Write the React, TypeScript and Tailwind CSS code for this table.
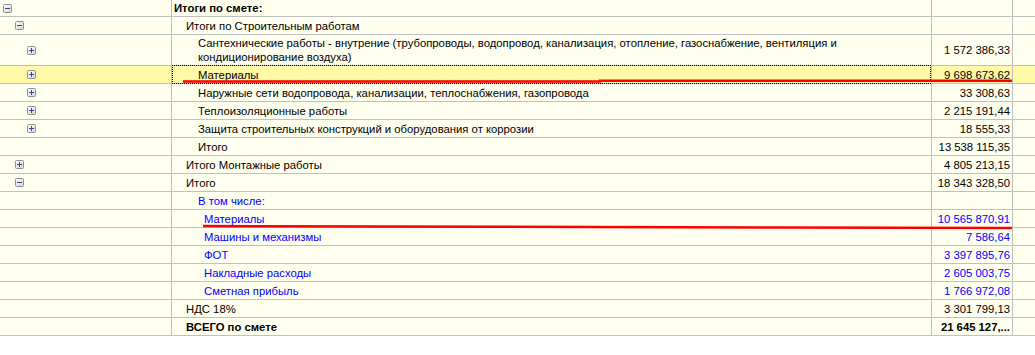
type Row = {
    icon?: 'plus' | 'minus';
    iconX?: number;
    indent: number;
    text: string;
    value?: string;
    blue?: boolean;
    bold?: boolean;
    selected?: boolean;
    tall?: boolean;
    first?: boolean;
};

const rows: Row[] = [
    { icon: 'minus', iconX: 3, indent: 2, text: 'Итоги по смете:', bold: true, first: true },
    { icon: 'minus', iconX: 15, indent: 14, text: 'Итоги по Строительным работам' },
    {
        icon: 'plus', iconX: 27, indent: 26, tall: true,
        text: 'Сантехнические работы - внутрение (трубопроводы, водопровод, канализация, отопление, газоснабжение, вентиляция и кондиционирование воздуха)',
        value: '1 572 386,33',
    },
    { icon: 'plus', iconX: 27, indent: 26, text: 'Материалы', value: '9 698 673,62', selected: true },
    { icon: 'plus', iconX: 27, indent: 26, text: 'Наружные сети водопровода, канализации, теплоснабжения, газопровода', value: '33 308,63' },
    { icon: 'plus', iconX: 27, indent: 26, text: 'Теплоизоляционные работы', value: '2 215 191,44' },
    { icon: 'plus', iconX: 27, indent: 26, text: 'Защита строительных конструкций и оборудования от коррозии', value: '18 555,33' },
    { indent: 26, text: 'Итого', value: '13 538 115,35' },
    { icon: 'plus', iconX: 15, indent: 14, text: 'Итого Монтажные работы', value: '4 805 213,15' },
    { icon: 'minus', iconX: 15, indent: 14, text: 'Итого', value: '18 343 328,50' },
    { indent: 26, text: 'В том числе:', blue: true },
    { indent: 32, text: 'Материалы', value: '10 565 870,91', blue: true },
    { indent: 32, text: 'Машины и механизмы', value: '7 586,64', blue: true },
    { indent: 32, text: 'ФОТ', value: '3 397 895,76', blue: true },
    { indent: 32, text: 'Накладные расходы', value: '2 605 003,75', blue: true },
    { indent: 32, text: 'Сметная прибыль', value: '1 766 972,08', blue: true },
    { indent: 14, text: 'НДС 18%', value: '3 301 799,13' },
    { indent: 14, text: 'ВСЕГО по смете', value: '21 645 127,...', bold: true },
];

function TreeBox({ type }: { type: 'plus' | 'minus' }) {
    return (
        <svg width="9" height="9" viewBox="0 0 9 9" className="block">
            <defs>
                <linearGradient id="tb" x1="0" y1="0" x2="1" y2="1">
                    <stop offset="0" stopColor="#ffffff" />
                    <stop offset="1" stopColor="#d6d3cc" />
                </linearGradient>
            </defs>
            <rect x="0.5" y="0.5" width="8" height="8" rx="1" fill="url(#tb)" stroke="#8f8f8f" />
            <line x1="2" y1="4.5" x2="7" y2="4.5" stroke="#32459a" />
            {type === 'plus' && <line x1="4.5" y1="2" x2="4.5" y2="7" stroke="#32459a" />}
        </svg>
    );
}

export default function App() {
    return (
        <div
            className="relative w-[1035px] h-[355px] bg-white overflow-hidden text-[11.3px] leading-[14px] text-black"
            style={{ fontFamily: 'Tahoma, "Liberation Sans", Arial, sans-serif' }}
        >
            <div className="flex flex-col">
                {rows.map((r, i) => (
                    <div
                        key={i}
                        className={`flex border-b border-[#c0c0c0] ${r.selected ? 'bg-[#fff9a8]' : 'bg-[#fffff0]'} ${r.first ? 'h-[17px]' : r.tall ? 'h-[31px]' : 'h-[18px]'}`}
                    >
                        <div className="w-[172px] shrink-0 border-r border-[#c0c0c0] flex items-center">
                            {r.icon && (
                                <div style={{ marginLeft: r.iconX }}>
                                    <TreeBox type={r.icon} />
                                </div>
                            )}
                        </div>
                        <div
                            className={`relative w-[760px] shrink-0 border-r border-[#c0c0c0] flex items-center pr-1 ${r.blue ? 'text-[#0000ff]' : ''} ${r.bold ? 'font-bold' : ''}`}
                            style={{ paddingLeft: r.indent }}
                        >
                            {r.selected && (
                                <div className="absolute inset-x-0 top-[-1px] bottom-[-1px] border border-dotted border-black" />
                            )}
                            <span>{r.text}</span>
                        </div>
                        <div
                            className={`w-[81px] shrink-0 border-r border-[#c0c0c0] flex items-center justify-end pr-[2px] whitespace-nowrap ${r.blue ? 'text-[#0000ff]' : ''} ${r.bold ? 'font-bold' : ''}`}
                        >
                            {r.value}
                        </div>
                        <div className="flex-1" />
                    </div>
                ))}
            </div>

            {/* red marker lines drawn over the table */}
            <svg className="absolute left-0 top-0 pointer-events-none" width="1035" height="355">
                <path d="M183 81.5 L600 81.5 L600 80.8 L1012 80.8" stroke="#ff0000" strokeWidth="2.5" fill="none" />
                <path d="M203 226 L500 226.8 L780 227.5 L1012 228" stroke="#ff0000" strokeWidth="2.5" fill="none" />
            </svg>
        </div>
    );
}
